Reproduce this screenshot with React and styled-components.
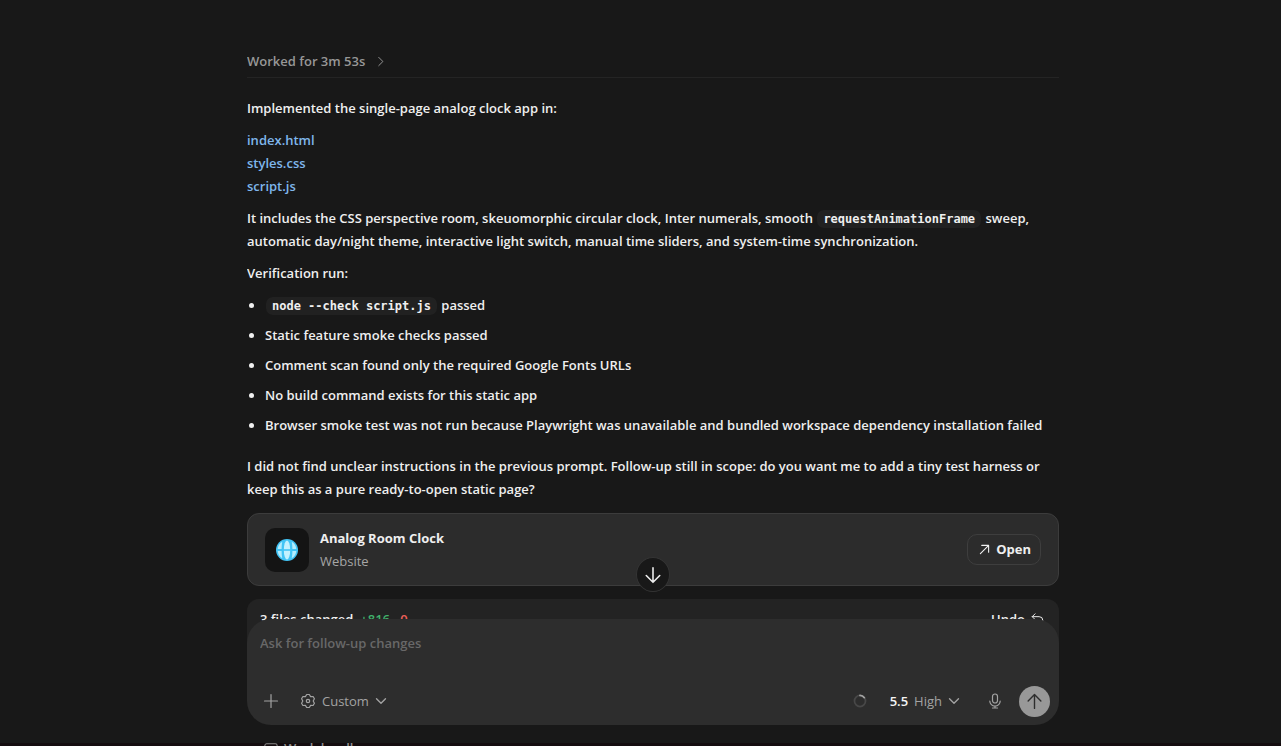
import { useState } from "react";
import styled, { createGlobalStyle } from "styled-components";

const GlobalStyle = createGlobalStyle`
  * {
    box-sizing: border-box;
  }
  body {
    margin: 0;
    background-color: #181818;
    color: #efefef;
    font-family: "Open Sans", "Noto Sans", sans-serif;
    font-size: 13px;
    font-weight: 600;
    line-height: 23px;
  }
  button,
  textarea {
    font: inherit;
    color: inherit;
    background: none;
    border: none;
    padding: 0;
  }
  button {
    cursor: pointer;
  }
  svg {
    display: block;
    flex: none;
  }
`;

const Page = styled.div`
  height: 100vh;
  display: flex;
  flex-direction: column;
  overflow: hidden;
  padding: 0 20px 0 45px;
  background: linear-gradient(#140c0f, #140c0f) bottom / 100% 3px no-repeat;
`;

const Thread = styled.main`
  flex: 1;
  min-height: 0;
  overflow: hidden;
  width: 100%;
  max-width: 812px;
  margin: 0 auto;
  padding-top: 46px;
`;

const WorkedButton = styled.button`
  display: flex;
  align-items: center;
  gap: 11px;
  width: 100%;
  height: 32px;
  border-bottom: 1px solid #242424;
  color: #979797;
`;

const Answer = styled.article`
  padding-top: 19px;
`;

const Paragraph = styled.p`
  margin: 0 0 9px;
`;

const FileList = styled.div`
  display: flex;
  flex-direction: column;
  align-items: flex-start;
  margin-bottom: 9px;
`;

const FileLink = styled.a`
  color: #7fb6ec;
  text-decoration: none;
`;

const Code = styled.code`
  margin: 0 1px;
  padding: 2px 6px;
  border-radius: 7px;
  background-color: #212121;
  font-family: "DejaVu Sans Mono", monospace;
  font-size: 12px;
  font-weight: 600;
  line-height: 16px;
`;

const CheckList = styled.ul`
  margin: 0 0 18px;
  padding-left: 18px;
  display: flex;
  flex-direction: column;
  gap: 7px;
`;

const Card = styled.section`
  display: flex;
  align-items: center;
  gap: 11px;
  height: 73px;
  margin-top: 12px;
  padding: 0 17px;
  border: 1px solid #3c3c3c;
  border-radius: 12px;
  background-color: #2c2c2c;
`;

const Thumb = styled.div`
  width: 44px;
  height: 44px;
  border-radius: 10px;
  background-color: #141414;
  display: grid;
  place-items: center;
`;

const CardText = styled.div`
  flex: 1;
`;

const CardTitle = styled.h2`
  margin: 0;
  font-size: 13px;
  font-weight: 700;
`;

const CardKind = styled.div`
  color: #a6a6a6;
  font-weight: 500;
`;

const OpenButton = styled.button`
  display: flex;
  align-items: center;
  gap: 6px;
  height: 31px;
  padding: 0 9px 0 11px;
  border: 1px solid #3e3e3e;
  border-radius: 10px;
  font-weight: 700;
`;

const ChangesCard = styled.section`
  display: flex;
  justify-content: space-between;
  margin-top: 13px;
  height: 60px;
  padding: 9px 15px 0 13px;
  border-radius: 12px;
  background-color: #232323;
`;

const Added = styled.span`
  margin: 0 6px 0 7px;
  color: #40b26b;
`;

const Removed = styled.span`
  color: #f0605a;
`;

const UndoButton = styled.button`
  display: flex;
  align-items: center;
  gap: 6px;
  height: 23px;
`;

const Dock = styled.div`
  position: relative;
  width: 100%;
  max-width: 812px;
  height: 127px;
  margin: -26px auto 0;
`;

const ScrollDown = styled.button`
  position: absolute;
  left: 50%;
  top: -62px;
  margin-left: -17px;
  width: 34px;
  height: 35px;
  border: 1px solid #343434;
  border-radius: 50%;
  background-color: #181818;
  display: grid;
  place-items: center;
`;

const Composer = styled.form`
  display: flex;
  flex-direction: column;
  justify-content: space-between;
  height: 106px;
  padding: 13px 9px 8px 13px;
  border-radius: 24px;
  background-color: #2d2d2d;
`;

const Prompt = styled.textarea`
  width: 100%;
  height: 46px;
  resize: none;
  outline: none;
  &::placeholder {
    color: #686868;
    opacity: 1;
  }
`;

const Toolbar = styled.div`
  display: flex;
  align-items: center;
  height: 32px;
  color: #a3a3a3;
  font-weight: 500;
`;

const ToolButton = styled.button`
  display: flex;
  align-items: center;
  gap: 6px;
  margin-left: ${({ $space }) => $space || 0}px;
`;

const Spacer = styled.div`
  flex: 1;
`;

const Model = styled.span`
  color: #f5f5f5;
  font-weight: 600;
`;

const SendButton = styled.button`
  width: 31px;
  height: 31px;
  margin-left: 16px;
  border-radius: 50%;
  background-color: #989898;
  color: #2d2d2d;
  display: grid;
  place-items: center;
`;

const ModeButton = styled.button`
  display: flex;
  align-items: center;
  gap: 6px;
  margin: 12px 0 0 17px;
  color: #8c8c8c;
`;

const Stroke = ({ size = 16, width = 1.2, children }) => (
  <svg
    width={size}
    height={size}
    viewBox="0 0 16 16"
    fill="none"
    stroke="currentColor"
    strokeWidth={width}
    strokeLinecap="round"
    strokeLinejoin="round"
    aria-hidden="true"
  >
    {children}
  </svg>
);

const ChevronDown = () => (
  <Stroke size={12} width={1.8}>
    <path d="M2 5l6 6 6-6" />
  </Stroke>
);

const Globe = () => (
  <svg width="22" height="22" viewBox="0 0 22 22" fill="none" aria-hidden="true">
    <circle cx="11" cy="11" r="11" fill="#42c4f5" />
    <ellipse cx="11" cy="11" rx="3.2" ry="9.5" fill="#c4f1fe" />
    <path
      d="M6.3 2.8C3.6 4.3 2 6.9 1.7 10h3.9c.1-2.8.2-5.2.7-7.2zM15.7 2.8c2.7 1.5 4.3 4.1 4.6 7.2h-3.9c-.1-2.8-.2-5.2-.7-7.2zM1.7 12c.3 3.1 1.9 5.7 4.6 7.2-.5-2-.6-4.4-.7-7.2zM20.3 12c-.3 3.1-1.9 5.7-4.6 7.2.5-2 .6-4.4.7-7.2z"
      fill="#b4ecfd"
    />
    <path d="M1 11h20" stroke="#42c4f5" strokeWidth="1.6" />
  </svg>
);

const files = ["index.html", "styles.css", "script.js"];

const App = () => {
  const [prompt, setPrompt] = useState("");

  return (
    <>
      <GlobalStyle />
      <Page>
        <Thread>
          <WorkedButton>
            Worked for 3m 53s
            <Stroke size={11} width={1.4}>
              <path d="M4 2l6 6-6 6" />
            </Stroke>
          </WorkedButton>
          <Answer>
            <Paragraph>Implemented the single-page analog clock app in:</Paragraph>
            <FileList>
              {files.map((file) => (
                <FileLink key={file} href={`#${file}`}>
                  {file}
                </FileLink>
              ))}
            </FileList>
            <Paragraph>
              It includes the CSS perspective room, skeuomorphic circular clock, Inter
              numerals, smooth <Code>requestAnimationFrame</Code> sweep, automatic
              day/night theme, interactive light switch, manual time sliders, and
              system-time synchronization.
            </Paragraph>
            <Paragraph>Verification run:</Paragraph>
            <CheckList>
              <li>
                <Code>node --check script.js</Code> passed
              </li>
              <li>Static feature smoke checks passed</li>
              <li>Comment scan found only the required Google Fonts URLs</li>
              <li>No build command exists for this static app</li>
              <li>
                Browser smoke test was not run because Playwright was unavailable and
                bundled workspace dependency installation failed
              </li>
            </CheckList>
            <Paragraph>
              I did not find unclear instructions in the previous prompt. Follow-up still
              in scope: do you want me to add a tiny test harness or keep this as a pure
              ready-to-open static page?
            </Paragraph>
          </Answer>
          <Card>
            <Thumb>
              <Globe />
            </Thumb>
            <CardText>
              <CardTitle>Analog Room Clock</CardTitle>
              <CardKind>Website</CardKind>
            </CardText>
            <OpenButton>
              <Stroke size={11} width={1.6}>
                <path d="M2 14L14 2M4 2h10v10" />
              </Stroke>
              Open
            </OpenButton>
          </Card>
          <ChangesCard>
            <div>
              3 files changed<Added>+816</Added>
              <Removed>-0</Removed>
            </div>
            <UndoButton>
              Undo
              <Stroke size={13} width={1.2}>
                <path d="M5 1L1.5 4.5 5 8M1.5 4.500H10a4.500 4.500 0 0 1 4.500 4.500v3" />
              </Stroke>
            </UndoButton>
          </ChangesCard>
        </Thread>
        <Dock>
          <ScrollDown aria-label="Scroll to bottom">
            <Stroke size={18} width={1.4}>
              <path d="M8 1.5v13M2 8.500L8 14.500 14 8.500" />
            </Stroke>
          </ScrollDown>
          <Composer onSubmit={(e) => e.preventDefault()}>
            <Prompt
              aria-label="Ask for follow-up changes"
              placeholder="Ask for follow-up changes"
              value={prompt}
              onChange={(e) => setPrompt(e.target.value)}
            />
            <Toolbar>
              <ToolButton type="button" aria-label="Add" $space={3}>
                <Stroke>
                  <path d="M8 1.5v13M1.5 8h13" />
                </Stroke>
              </ToolButton>
              <ToolButton type="button" $space={21}>
                <Stroke>
                  <path d="M6.7 1.5h2.600l1.300 2.100 2.500-.1 1.300 2.200L13.200 8l1.200 2.300-1.300 2.200-2.500-.1-1.300 2.100H6.700l-1.300-2.100-2.500.1-1.300-2.200L2.800 8 1.600 5.700l1.300-2.200 2.500.1z" />
                  <circle cx="8" cy="8" r="1.7" />
                </Stroke>
                Custom
                <ChevronDown />
              </ToolButton>
              <Spacer />
              <Stroke size={14} width={2}>
                <circle cx="8" cy="8" r="6.3" stroke="#484848" />
                <path d="M8 1.7a6.3 6.3 0 0 1 5 2.5" />
              </Stroke>
              <ToolButton type="button" $space={23}>
                <Model>5.5</Model>
                High
                <ChevronDown />
              </ToolButton>
              <ToolButton type="button" aria-label="Dictate" $space={27}>
                <Stroke>
                  <rect x="5.5" y="1" width="5" height="9" rx="2.5" />
                  <path d="M2.8 8a5.2 5.2 0 0 0 10.4 0M8 13.2V15M5.5 15h5" />
                </Stroke>
              </ToolButton>
              <SendButton aria-label="Send">
                <Stroke size={17} width={1.3}>
                  <path d="M8 14.5v-13M2 7.5L8 1.5 14 7.5" />
                </Stroke>
              </SendButton>
            </Toolbar>
          </Composer>
          <ModeButton>
            <Stroke size={14}>
              <rect x="1" y="2" width="14" height="10" rx="2" />
            </Stroke>
            Work locally
            <ChevronDown />
          </ModeButton>
        </Dock>
      </Page>
    </>
  );
};

export default App;
